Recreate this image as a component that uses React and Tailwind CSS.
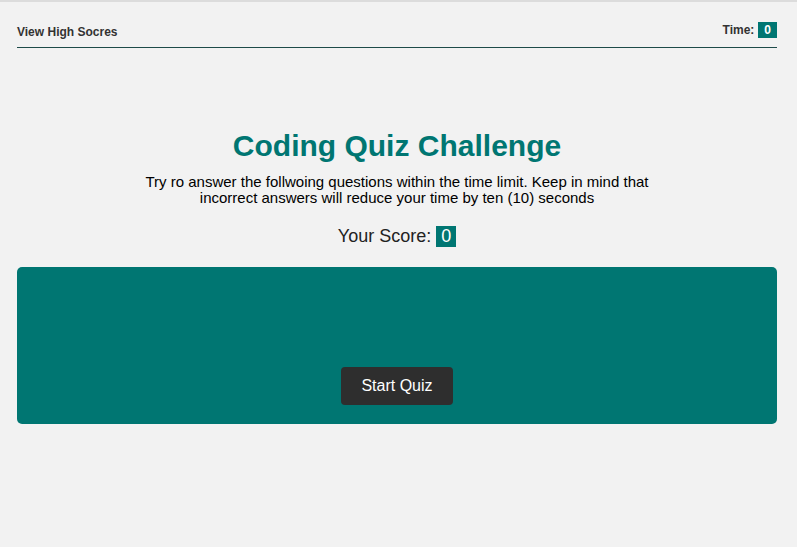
import React from 'react';

export default function App() {
  return (
    <div className="min-h-[547px] bg-[#f2f2f2] border-t-2 border-[#dcdcdc] text-[#222] font-['Liberation_Sans',Arial,sans-serif]">
      <header className="ml-[17px] mr-[20px] flex items-end justify-between pt-[20px] pb-[8px] border-b border-[#1e4b49]">
        <a className="text-[12px] font-bold text-[#333] leading-[14px]">View High Socres</a>
        <div className="flex items-center gap-[4px] text-[12px] font-bold text-[#333] leading-[14px] mb-[1px]">
          <span>Time:</span>
          <span className="bg-[#007672] text-white px-[6px] h-[16px] leading-[16px]">0</span>
        </div>
      </header>

      <main className="ml-[17px] mr-[20px] mt-[80px] flex flex-col items-center">
        <h1 className="text-[30px] font-bold text-[#007672] leading-[36px]">Coding Quiz Challenge</h1>
        <p className="mt-[10px] text-[15px] leading-[16px] text-black text-center w-[540px]">
          Try ro answer the follwoing questions within the time limit. Keep in mind that incorrect answers will reduce your time by ten (10) seconds
        </p>
        <div className="mt-[20px] flex items-center gap-[5px] text-[18px] leading-[21px] text-[#222]">
          <span>Your Score:</span>
          <span className="bg-[#007672] text-white px-[5px] h-[21px] leading-[21px]">0</span>
        </div>
        <section className="mt-[20px] w-full h-[157px] bg-[#007672] rounded-[5px] flex items-end justify-center pb-[19px]">
          <button className="w-[112px] h-[38px] bg-[#2e2e2e] text-white text-[16px] rounded-[4px]">Start Quiz</button>
        </section>
      </main>
    </div>
  );
}
